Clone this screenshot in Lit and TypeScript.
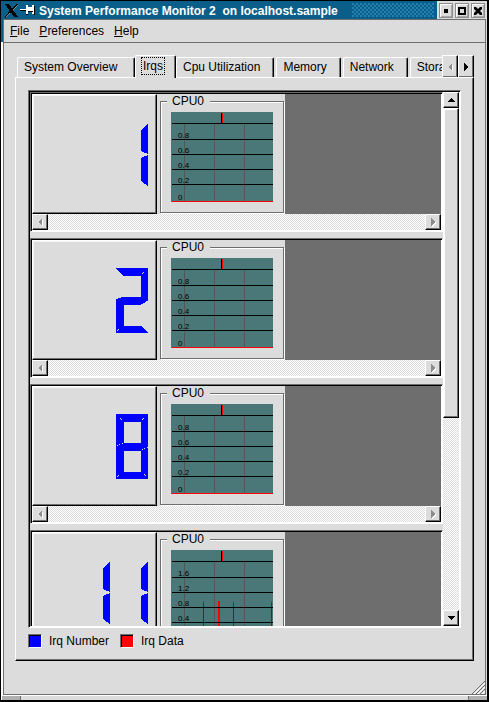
import { LitElement, html, svg, css } from "lit";
import { customElement, property, state } from "lit/decorators.js";
import { classMap } from "lit/directives/class-map.js";

const SEGMENTS: Record<string, string> = {
  a: "0,0 32,0 25,7 7,7",
  b: "32,1 32,32 25,29 25,8",
  c: "32,33 32,64 25,59 25,36",
  d: "7,58 25,58 32,65 0,65",
  e: "0,32 7,35 7,58 0,65",
  f: "0,0 7,7 7,29 0,32",
  g: "7,29 25,29 32,32 25,36 7,36 0,32",
};

const LIT_SEGMENTS: Record<string, string> = {
  "1": "bc",
  "2": "abged",
  "8": "abcdefg",
};

/** Seven segment number display. */
@customElement("lcd-number")
export class LcdNumber extends LitElement {
  static styles = css`
    :host {
      display: flex;
      justify-content: flex-end;
      gap: 6px;
      box-sizing: border-box;
      padding: 27px 8px 0 0;
      background: #dcdcdc;
      border: 1px solid;
      border-color: #fff #000 #000 #fff;
      box-shadow: inset -1px -1px 0 #6e6e6e, inset 1px 1px 0 #f4f4f4;
    }
    svg {
      width: 32px;
      height: 65px;
      fill: #00f;
    }
    .solid { stroke: #00f; stroke-width: 1; }
    .joint { fill: none; stroke: #dcdcdc; stroke-width: 1; stroke-dasharray: 1 1; }
  `;
  @property() value = "";
  render() {
    return [...this.value].map(
      (d) => html`<svg viewBox="0 0 32 65" shape-rendering="crispEdges" role="img" aria-label=${d}>
        ${[...(LIT_SEGMENTS[d] ?? "")].map(
          (s) => svg`<polygon class=${d === "1" ? "" : "solid"} points=${SEGMENTS[s]}></polygon>`
        )}
        ${d === "1" ? "" : svg`<path class="joint" d="M26 6l3 -3M1 63l3 -3"></path>`}
        ${d === "8"
          ? svg`<path class="joint" d="M4 4l3 3M28 60l3 3M1 32l6 -3M26 36l6 -3"></path>`
          : ""}
      </svg>`
    );
  }
}

/** Small history plot with a scale on the left. */
@customElement("irq-plot")
export class IrqPlot extends LitElement {
  static styles = css`
    :host {
      display: block;
      width: 102px;
      height: 90px;
      border-right: 1px solid #fff;
      border-bottom: 1px solid #fff;
    }
    svg {
      display: block;
      width: 102px;
      height: 90px;
      background: #4a7878;
    }
    text {
      font: 8px "Liberation Sans", Arial, sans-serif;
      fill: #000;
    }
    .v { fill: #555; }
    .h { fill: #000; }
    .red { fill: #f00; }
    .spike { fill: #a80000; }
  `;
  @property({ attribute: false }) labels: string[] = [];
  @property({ attribute: false }) spikes: { x: number; w: number }[] = [];
  render() {
    return html`<svg viewBox="0 0 102 90" shape-rendering="crispEdges">
      ${[13, 43, 73].map((x) => svg`<rect class="v" x=${x} y="12" width="1" height="77"></rect>`)}
      ${this.spikes.map(
        (s) => svg`<rect class=${s.w > 1 ? "red" : "spike"} x=${s.x} y="51" width=${s.w} height="38"></rect>
          <rect class="red" x=${s.x} y="51" width=${s.w} height="2"></rect>`
      )}
      ${[11, 27, 42, 57, 72].map((y) => svg`<rect class="h" x="1" y=${y} width="101" height="1"></rect>`)}
      <rect class="h" x="50" y="1" width="1" height="10"></rect>
      <rect class="red" x="51" y="1" width="1" height="10"></rect>
      <rect class="red" x="1" y="89" width="101" height="1"></rect>
      ${this.labels.map((l, i) => svg`<text x="7" y=${i === 4 ? 88 : 26 + i * 15}>${l}</text>`)}
    </svg>`;
  }
}

interface Irq {
  id: string;
  labels: string[];
  spikes: { x: number; w: number }[];
}

const UNIT = ["0.8", "0.6", "0.4", "0.2", "0"];
const IRQS: Irq[] = [
  { id: "1", labels: UNIT, spikes: [] },
  { id: "2", labels: UNIT, spikes: [] },
  { id: "8", labels: UNIT, spikes: [] },
  {
    id: "11",
    labels: ["1.6", "1.2", "0.8", "0.4"],
    spikes: [{ x: 32, w: 1 }, { x: 47, w: 2 }, { x: 62, w: 1 }, { x: 100, w: 1 }],
  },
];
const TABS = ["System Overview", "Irqs", "Cpu Utilization", "Memory", "Network", "Storage"];
const MENUS = ["File", "Preferences", "Help"];

const ARROWS: Record<string, string> = {
  left: "M6 0v8L2 4z",
  right: "M2 0v8l4 -4z",
  up: "M4 2L0 6h8z",
  down: "M0 2h8L4 6z",
};
const arrow = (dir: string) =>
  html`<svg class="arrow" viewBox="0 0 8 8" shape-rendering="crispEdges"><path d=${ARROWS[dir]}></path></svg>`;

@customElement("app-root")
export class AppRoot extends LitElement {
  static styles = css`
    :host {
      display: block;
      height: 100vh;
      font: 12px/14px "Liberation Sans", Arial, sans-serif;
      color: #000;
    }
    * { box-sizing: border-box; }
    button {
      font: inherit;
      color: inherit;
      margin: 0;
      padding: 0;
      border: 0;
      border-radius: 0;
      background: #dcdcdc;
    }
    .window {
      height: 100%;
      display: flex;
      flex-direction: column;
      border: solid #000;
      border-width: 1px 2px 2px 1px;
      background: linear-gradient(#0a5f8a 41px, #fff 41px) no-repeat left / 2px 100%, #dcdcdc;
    }
    .title {
      height: 18px;
      flex: none;
      display: flex;
      align-items: center;
      background: #0a5f8a;
      color: #fff;
    }
    .title svg { flex: none; display: block; }
    .logo { width: 14px; height: 14px; margin: 2px 0 0 4px; }
    .pin { width: 15px; height: 10px; margin: 0 4px 0 1px; }
    h1 {
      margin: 0;
      font-size: 12px;
      line-height: 14px;
      font-weight: bold;
      white-space: pre;
      padding-top: 2px;
    }
    .dots {
      flex: 1;
      height: 14px;
      margin: 0 3px 0 14px;
      background:
        radial-gradient(circle at 1px 1px, #2480b0 0.8px, transparent 0.8px) 0 0 / 4px 4px,
        radial-gradient(circle at 1px 1px, #2480b0 0.8px, transparent 0.8px) 2px 2px / 4px 4px;
    }
    .controls {
      height: 18px;
      display: flex;
      gap: 2px;
      align-items: flex-end;
      padding: 0 2px 1px;
      background: #dcdcdc;
    }
    .control {
      width: 14px;
      height: 15px;
      border: 1px solid #8c8c8c;
      box-shadow: inset 1px 1px 0 #fff, inset -1px -1px 0 #a8a8a8;
      display: grid;
      place-items: center;
    }
    .control svg { width: 8px; height: 8px; }
    .client {
      flex: 1;
      min-height: 0;
      display: flex;
      flex-direction: column;
      margin: 0 1px 0 2px;
      border: 1px solid #6e6e6e;
      background: #dcdcdc;
    }
    .menu {
      display: flex;
      gap: 10px;
      height: 23px;
      flex: none;
      padding: 0 6px;
      border-bottom: 1px solid #6e6e6e;
    }
    .menu button::first-letter { text-decoration: underline; }
    .menu button { display: block; }
    .main {
      flex: 1;
      min-height: 0;
      display: flex;
      flex-direction: column;
      padding: 12px 11px 0;
    }
    .tabbar { display: flex; height: 23px; flex: none; }
    .tabs {
      flex: 1;
      min-width: 0;
      overflow: hidden;
      display: flex;
      align-items: flex-end;
      gap: 2px;
      padding-left: 2px;
    }
    .tab {
      flex: none;
      height: 21px;
      padding: 0 13px 2px 6px;
      border: 1px solid;
      border-color: #fff #000 #fff #fff;
      border-radius: 2px 2px 0 0;
      box-shadow: inset -1px 0 0 #6e6e6e;
      white-space: nowrap;
      text-align: left;
    }
    .tab:first-child { min-width: 118px; }
    .tab.active {
      height: 23px;
      margin: 0 -2px;
      padding: 0 11px 3px 6px;
      border-bottom: 0;
      z-index: 1;
    }
    .tab.active span { display: block; padding: 1px; outline: 1px dotted #000; }
    .raised {
      display: grid;
      place-items: center;
      width: 16px;
      height: 16px;
      flex: none;
      border: 1px solid;
      border-color: #fff #000 #000 #fff;
      box-shadow: inset -1px -1px 0 #6e6e6e;
    }
    .tabbar .raised { height: 23px; }
    .arrow { width: 8px; height: 8px; }
    .raised:disabled .arrow { fill: #8c8c8c; filter: drop-shadow(1px 1px 0 #fff); }
    .panel {
      flex: 1;
      min-height: 0;
      display: flex;
      flex-direction: column;
      margin-top: -1px;
      padding: 12px;
      border: 1px solid;
      border-color: #fff #000 #000 #fff;
      box-shadow: inset -1px -1px 0 #6e6e6e;
    }
    .sunken {
      border: 1px solid;
      border-color: #6e6e6e #fff #fff #6e6e6e;
      padding: 1px;
      box-shadow: inset 1px 1px 0 #000, inset -1px -1px 0 #fff;
    }
    .view {
      flex: 1;
      min-height: 0;
      display: flex;
    }
    .list { flex: 1; min-width: 0; overflow: hidden; }
    .irq { height: 140px; margin-bottom: 6px; }
    .content { display: flex; height: 120px; background: #6e6e6e; }
    .content lcd-number { width: 125px; flex: none; }
    .cpus { width: 128px; flex: none; padding-left: 3px; background: #dcdcdc; }
    fieldset {
      width: 124px;
      height: 119px;
      margin: 0;
      padding: 4px 0 0 10px;
      border: 1px solid #6e6e6e;
      box-shadow: 1px 1px 0 #fff, inset 1px 1px 0 #fff;
    }
    legend {
      margin: 0 0 0 -4px;
      padding: 0 6px 0 5px;
      background: #dcdcdc;
    }
    .track {
      background: repeating-conic-gradient(#fff 0 25%, #dcdcdc 0 50%) 0 0 / 2px 2px;
      display: flex;
      justify-content: space-between;
    }
    .horizontal { height: 16px; }
    .vertical { width: 16px; flex: none; flex-direction: column; }
    .thumb {
      flex: none;
      height: 58%;
      margin-bottom: auto;
      border: 1px solid;
      border-color: #fff #000 #000 #fff;
      box-shadow: inset -1px -1px 0 #6e6e6e, inset 1px 1px 0 #fff;
      background: #dcdcdc;
    }
    .legend { display: flex; align-items: center; padding-top: 6px; }
    .swatch {
      width: 14px;
      height: 14px;
      margin-right: 7px;
      border: 1px solid;
      border-color: #6e6e6e #fff #fff #6e6e6e;
      box-shadow: inset 1px 1px 0 #000;
    }
    .legend span { margin-right: 11px; }
    .blue { background: #00f; }
    .red { background: #f00; }
    .grip {
      align-self: flex-end;
      display: block;
      width: 13px;
      height: 13px;
      margin: 20px -11px 0 0;
      flex: none;
    }
    .foot {
      display: flex;
      height: 5px;
      flex: none;
      margin-left: 1px;
      border-top: 1px solid #fff;
    }
    .foot i { width: 19px; background: #b0b0b0; border-right: 1px solid #6e6e6e; }
    .foot i:last-child { margin-left: auto; border-right: 0; border-left: 1px solid #6e6e6e; }
  `;

  @state() private tab = "Irqs";

  private renderIrq(irq: Irq) {
    return html`<section class="irq sunken">
      <div class="content">
        <lcd-number .value=${irq.id}></lcd-number>
        <div class="cpus">
          <fieldset>
            <legend>CPU0</legend>
            <irq-plot .labels=${irq.labels} .spikes=${irq.spikes}></irq-plot>
          </fieldset>
        </div>
      </div>
      <div class="track horizontal">
        <button class="raised" disabled aria-label="Scroll left">${arrow("left")}</button>
        <button class="raised" disabled aria-label="Scroll right">${arrow("right")}</button>
      </div>
    </section>`;
  }

  render() {
    return html`<div class="window">
      <header class="title">
        <svg class="logo" viewBox="0 0 14 14" shape-rendering="crispEdges">
          <path d="M0 0h4l9 13h-4z"></path>
          <path d="M12 0h1L1 13H0z" stroke="#000"></path>
          <path d="M13 1L8 6M5 9L1 13" stroke="#7c8c94" fill="none"></path>
        </svg>
        <svg class="pin" viewBox="0 0 15 10" shape-rendering="crispEdges">
          <path d="M0 5h7M7 0v10" stroke="#000" stroke-width="2"></path>
          <path d="M0 4h6v1H0zM6 0h2v2h4V0h2v9h-2V7H8v2H6z" fill="#fff"></path>
          <path d="M8 6h5M14 1v9" stroke="#000"></path>
        </svg>
        <h1>System Performance Monitor 2  on localhost.sample</h1>
        <div class="dots"></div>
        <div class="controls">
          <button class="control" aria-label="Minimize">
            <svg viewBox="0 0 8 8"><path d="M2 2h4v4H2z"></path></svg>
          </button>
          <button class="control" aria-label="Maximize">
            <svg viewBox="0 0 8 8"><path d="M1 1h6v6H1z" fill="none" stroke="#000" stroke-width="2"></path></svg>
          </button>
          <button class="control" aria-label="Close">
            <svg viewBox="0 0 8 8"><path d="M0 0h2l2 2 2-2h2v2L6 4l2 2v2H6L4 6 2 8H0V6l2-2-2-2z"></path></svg>
          </button>
        </div>
      </header>
      <div class="client">
        <nav class="menu">${MENUS.map((m) => html`<button>${m}</button>`)}</nav>
        <main class="main">
          <div class="tabbar">
            <div class="tabs" role="tablist">
              ${TABS.map(
                (t) => html`<button
                  role="tab"
                  class=${classMap({ tab: true, active: t === this.tab })}
                  aria-selected=${t === this.tab}
                  @click=${() => (this.tab = t)}
                ><span>${t}</span></button>`
              )}
            </div>
            <button class="raised" disabled aria-label="Previous tabs">${arrow("left")}</button>
            <button class="raised" aria-label="Next tabs">${arrow("right")}</button>
          </div>
          <div class="panel">
            <div class="view sunken">
              <div class="list">${IRQS.map((i) => this.renderIrq(i))}</div>
              <div class="track vertical">
                <button class="raised" aria-label="Scroll up">${arrow("up")}</button>
                <div class="thumb"></div>
                <button class="raised" aria-label="Scroll down">${arrow("down")}</button>
              </div>
            </div>
            <div class="legend">
              <div class="swatch blue"></div><span>Irq Number</span>
              <div class="swatch red"></div><span>Irq Data</span>
            </div>
          </div>
          <svg class="grip" viewBox="0 0 13 13">
            <path d="M1 14L14 1M5 14L14 5M9 14L14 9" stroke="#fff" stroke-width="1"></path>
            <path d="M0 13L13 0M4 13L13 4M8 13L13 8" stroke="#6e6e6e" stroke-width="1"></path>
          </svg>
        </main>
      </div>
      <footer class="foot"><i></i><i></i></footer>
    </div>`;
  }
}
